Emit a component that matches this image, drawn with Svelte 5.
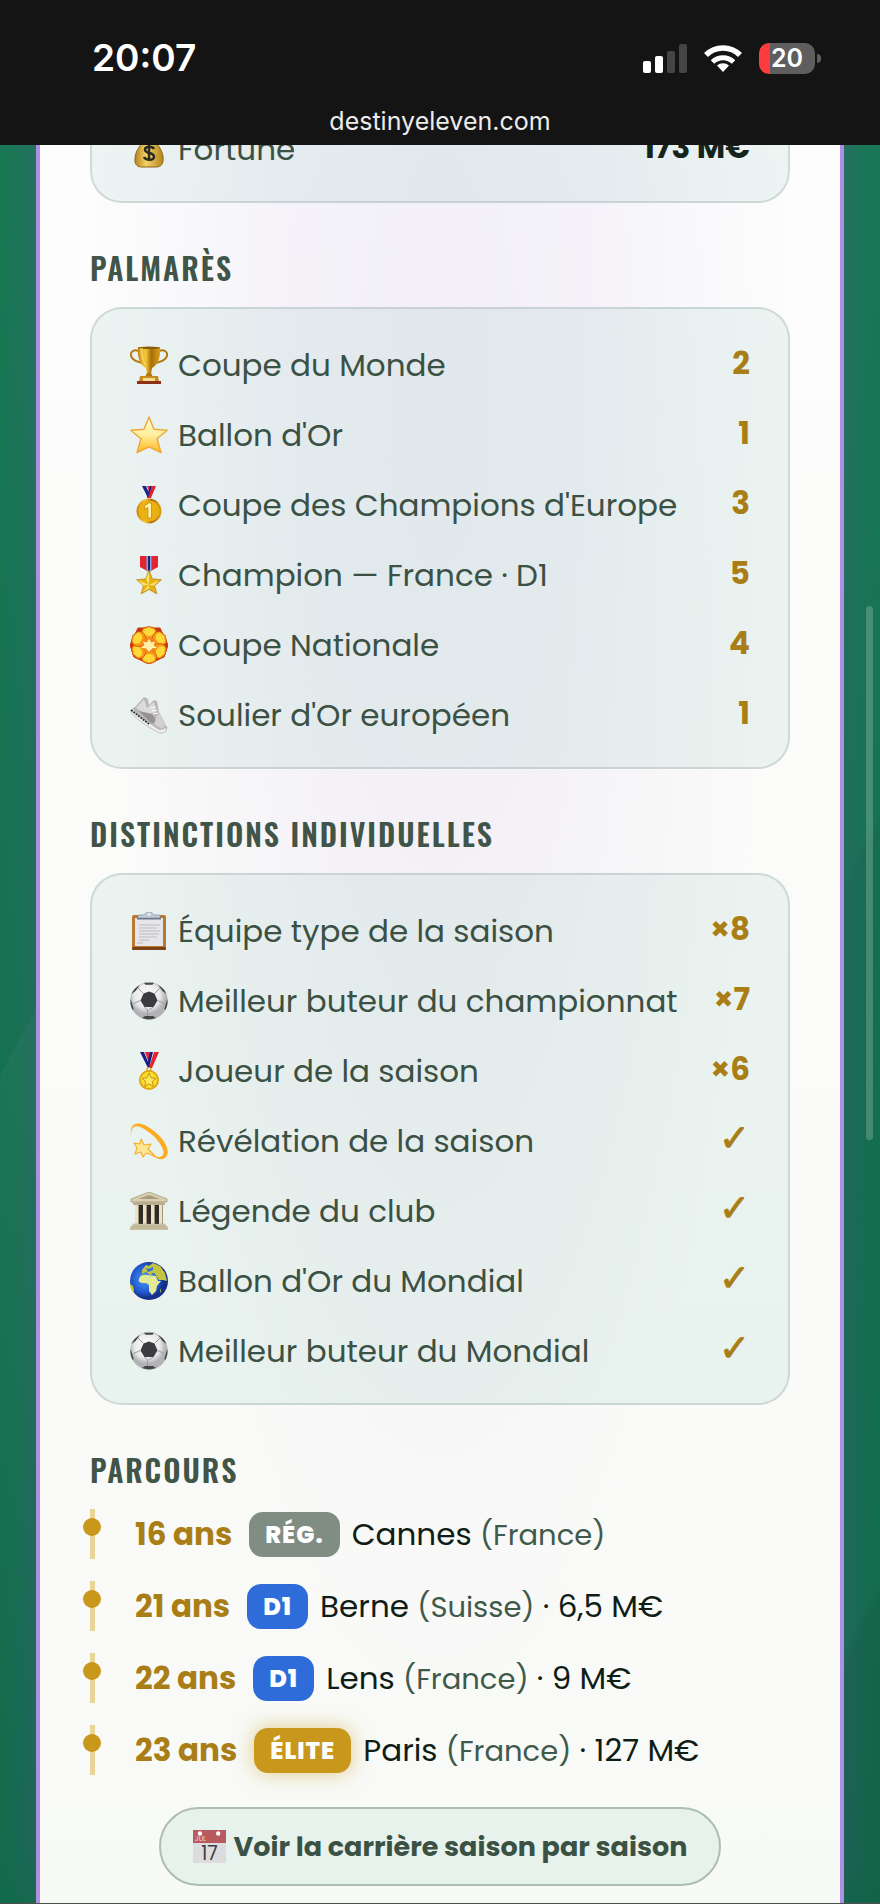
<script lang="ts">
	type Row = { icon: string; label: string; value: string };
	type Stop = { age: number; tier: "reg" | "d1" | "elite"; club: string; country: string; fee?: string };

	const tierNames = { reg: "RÉG.", d1: "D1", elite: "ÉLITE" };

	const stats: Row[] = [{ icon: "money", label: "Fortune", value: "173 M€" }];

	const trophies: Row[] = [
		{ icon: "trophy", label: "Coupe du Monde", value: "2" },
		{ icon: "star", label: "Ballon d'Or", value: "1" },
		{ icon: "medal-first", label: "Coupe des Champions d'Europe", value: "3" },
		{ icon: "medal-military", label: "Champion — France · D1", value: "5" },
		{ icon: "rosette", label: "Coupe Nationale", value: "4" },
		{ icon: "shoe", label: "Soulier d'Or européen", value: "1" },
	];

	const honours: Row[] = [
		{ icon: "clipboard", label: "Équipe type de la saison", value: "×8" },
		{ icon: "ball", label: "Meilleur buteur du championnat", value: "×7" },
		{ icon: "medal-sport", label: "Joueur de la saison", value: "×6" },
		{ icon: "dizzy", label: "Révélation de la saison", value: "✓" },
		{ icon: "temple", label: "Légende du club", value: "✓" },
		{ icon: "globe", label: "Ballon d'Or du Mondial", value: "✓" },
		{ icon: "ball", label: "Meilleur buteur du Mondial", value: "✓" },
	];

	const career: Stop[] = [
		{ age: 16, tier: "reg", club: "Cannes", country: "France" },
		{ age: 21, tier: "d1", club: "Berne", country: "Suisse", fee: "6,5 M€" },
		{ age: 22, tier: "d1", club: "Lens", country: "France", fee: "9 M€" },
		{ age: 23, tier: "elite", club: "Paris", country: "France", fee: "127 M€" },
	];
</script>

{#snippet icon(name: string)}
	<svg class="icon" viewBox="0 0 38 38" aria-hidden="true">
		{#if name === "money"}
			<path d="M14 2h10l-2 8c8 5 12 14 11 21-.4 4-3 6-7 6H12c-4 0-7-2-7-6-.5-8 4-16 11-21z" fill="url(#gold-v)" stroke="#8c6516" stroke-width="1" />
			<path d="M14 10h10" stroke="#8a5a1c" stroke-width="3" />
			<path d="M24 19c-1-2.500-8.500-3.500-9 .5-.4 4.500 9 2.500 9 7 0 4.500-8.500 4-10 .5M19 14v17" fill="none" stroke="#2b2a22" stroke-width="2.400" />
		{:else if name === "trophy"}
			<path d="M9 5C1 2-1 9 3 13c3 3 7 3 9 4M29 5c8-3 10 4 6 8-3 3-7 3-9 4" fill="none" stroke="#b47a0e" stroke-width="2" />
			<path d="M8 1h22c1 10-2 18-8 21l-1 6h-4l-1-6C10 19 7 11 8 1z" fill="url(#gold-h)" />
			<ellipse cx="19" cy="1.800" rx="11" ry="1.300" fill="#8a5c08" />
			<path d="M13 2c0 8 1 14 4 18-5-3-7-9-7-18z" fill="#ffe98a" opacity=".5" />
			<path d="M17 27h4l2 4h-8z" fill="#b37808" />
			<path d="M10 30h18l1 6H9z" fill="#c98a1c" />
			<path d="M13 32h12v3H13z" fill="#f7d98f" />
			<path d="M7 35h24v3H7z" fill="#8d3115" />
		{:else if name === "star"}
			<path d="M19 1l5 12.200 13.200 1-10.200 8.600L31 36.500l-12-5.700L7 36.500l4-13.700L.8 14.200l13.200-1z" fill="url(#star-fill)" stroke="#f0a83a" stroke-width="1.500" stroke-linejoin="round" />
		{:else if name === "medal-first"}
			<path d="M12 0h4l4 9-2 3z" fill="#1c2489" />
			<path d="M17 0h4l-1 8z" fill="#e5232d" />
			<path d="M22 0h4l-5 12h-4z" fill="#e5232d" />
			<path d="M20 0h2l-4 12-1-2z" fill="#1c2489" />
			<circle cx="19" cy="25" r="12.500" fill="url(#gold-h)" />
			<circle cx="19" cy="25" r="10.500" fill="#edb013" />
			<path d="M14.500 20l4-3h3v15h-3.600V21.500l-3.400 1.800z" fill="#fff0a6" stroke="#b98207" stroke-width=".7" />
		{:else if name === "medal-military"}
			<path d="M10 0h18v11l-9 5-9-5z" fill="#e52431" />
			<path d="M16.500 0h5v15l-2.500 1-2.500-1z" fill="#7fa8e8" />
			<path d="M18 0h2v16h-2z" fill="#1a2570" />
			<path d="M19 14l3.300 8.800 9.200.9-7 6 2.500 8.300-8-4.600-8 4.600 2.500-8.300-7-6 9.200-.9z" fill="#e8b310" stroke="#b08011" stroke-width=".7" />
			<path d="M19 16v13l-3-6zM19 29l-11-5 5.500 5.500zM19 29l-6.500 7 6.500-3.500zM19 29l10-5-5 5.500z" fill="#fff08a" opacity=".8" />
		{:else if name === "rosette"}
			<path d="M8 2l22 0 8 17-4 12-15 7-15-7-4-12z" fill="#c9380d" stroke="#c9380d" stroke-linejoin="round" />
			{#each [0, 60, 120, 180, 240, 300] as turn}
				<g transform="rotate({turn} 19 19)">
					<path d="M19 14c-6 0-9-6-7-10 2-4 5-2 7-4 2 2 5 0 7 4 2 4-1 10-7 10z" fill="#f79a17" stroke="#c9470c" stroke-width=".7" />
					<path d="M13.500 4c2-2 4-1 5.500-3 1.500 2 3.500 1 5.500 3 1 3-1 6-5.500 6s-6.500-3-5.500-6z" fill="#fdda38" />
				</g>
			{/each}
			<circle cx="19" cy="19" r="7.500" fill="#f2841c" />
			<path d="M19 12.500l2 4 4-1-1.500 3.500L27 22l-4.600.3L19 26l-3-3.700-5-.3 3.400-3-1.400-3.500 4 1z" fill="#fff2a8" />
		{:else if name === "shoe"}
			<path d="M2 13c4-2 7-7 12-12l4 2 1 6 5-5 3 1 2 11 7 13c2 4 0 7-4 7-8-4-20-14-30-23z" fill="#b9b7b8" />
			<path d="M6 12l8-9 3 9 7-6 2 10-9 3z" fill="#dcdadb" />
			<path d="M9 15l13 3 6 9-7 0z" fill="#949295" />
			<path d="M26 22l3-5 7 12-4 4-8-5z" fill="#d3cfd0" />
			<path d="M1 14l27 19c3 1 6 0 9-2l-1 4c-3 3-7 2-10 0C18 31 9 25 2 18z" fill="#f1efef" stroke="#a5a2a5" stroke-width=".6" />
			<path d="M1 14l18 14" stroke="#343238" stroke-width="1.800" stroke-dasharray="2 1" />
			<path d="M21 12l5-1M22 15l5-1M23 18l5-1" stroke="#fff" stroke-width="1" />
		{:else if name === "clipboard"}
			<rect x="2" y="3" width="34" height="35" rx="2" fill="#b97833" />
			<rect x="2" y="35" width="34" height="3" rx="1" fill="#7d4218" />
			<path d="M5 6h28v28H5z" fill="#e6e6e8" />
			<path d="M9 13h21M9 16h18M9 19h21M9 22h20M9 25h18M9 28h10M7 31h6" stroke="#bdbdc0" stroke-width="1" />
			<path d="M8 3h6c2-4 8-4 10 0h6v3H8z" fill="#c2cad8" stroke="#8993a6" stroke-width=".7" />
			<circle cx="19" cy="2.500" r="1.300" fill="#f0f4f6" />
			<path d="M7 6h24v1.500H7z" fill="#6e7788" />
		{:else if name === "ball"}
			<circle cx="19" cy="19" r="18.400" fill="url(#ball-fill)" stroke="#a9a9ab" stroke-width=".6" />
			<path d="M13.500 11.500L19 9.500l5.500 2 3 7-4 6.500h-9l-4-6.500z" fill="#3b3c3f" />
			<path d="M10 3c-4 2-7 5-8.500 9l4-3zM28 3c4 2 7 5 8.500 9l-4-3zM12 36c5 1.800 9 1.800 14 0l-3-2h-8zM.7 17l3 10-1 1C1 25 0 21 .7 17zM37.300 17l-3 10 1 1c1.700-3 2.700-7 2-11zM14 .8h10l-1.500 2h-7z" fill="#45464a" />
			<path d="M13.500 11.500L8 6M24.500 11.500L30 6M27.500 18.500l7 3M10.500 18.500l-7 3M14.500 25l3 3v6M23.500 25l-5 3" stroke="#9b9b9f" stroke-width="1" fill="none" />
		{:else if name === "medal-sport"}
			<path d="M10 0h4l6 15-2 1z" fill="#171f86" />
			<path d="M15 0h5l1 7-2 5z" fill="#e5232d" />
			<path d="M24 0h5l-7 16h-3z" fill="#e5232d" />
			<path d="M20 0h3l-4 16-2-3z" fill="#171f86" />
			<circle cx="19" cy="17.500" r="2" fill="none" stroke="#d29b12" stroke-width="1.200" />
			<circle cx="19" cy="28" r="10" fill="#dea40d" />
			<circle cx="19" cy="28" r="8.200" fill="#fbdc2c" />
			<path d="M19 21l2 4.800 5 .4-3.800 3.300 1.200 5L19 31.800l-4.400 2.700 1.200-5-3.800-3.300 5-.4z" fill="#ffe95c" stroke="#b98207" stroke-width=".8" />
		{:else if name === "dizzy"}
			<path d="M1 14C-1-1 10-2 24 9s18 25 9 28c-4 1-10-2-13-5 5 3 10 4 12 2 5-4-3-16-12-23S1-1 1 14z" fill="#fbab22" />
			<path d="M11 17l3 6 7-1-3 5 7 7-9-3-3 4-2-5-6 2 2-6-3-5 6 1z" fill="#ffe894" stroke="#f5ad32" stroke-width="1.200" stroke-linejoin="round" />
		{:else if name === "temple"}
			<path d="M19 0l18 7v3H1V7z" fill="#d9ceb0" stroke="#9c9274" stroke-width=".7" />
			<path d="M19 3l11 4H8z" fill="#a89d80" />
			<path d="M3 10h32v3H3z" fill="#b9ae90" />
			<path d="M6 13h26v19H6z" fill="#2f2b26" />
			<path d="M5 13h4v19H5zM13 13h4v19h-4zM21 13h4v19h-4zM29 13h4v19h-4z" fill="#ebe2c8" />
			<path d="M8 13h1v19H8zM16 13h1v19h-1zM24 13h1v19h-1zM32 13h1v19h-1z" fill="#a0967b" />
			<path d="M3 32h32v2H3zM1 34h36v2H1zM0 36h38v2H0z" fill="#d6ccae" stroke="#9c9274" stroke-width=".4" />
		{:else if name === "globe"}
			<circle cx="19" cy="19" r="19" fill="url(#sea)" />
			<path d="M9 17c1-4 4-5 8-4l9 1 2 5 3 0-4 5-1 5-4 4-3-4 0-6-3-2-4 0c-3-1-4-2-3-4z" fill="#e3ea95" />
			<path d="M12 8l4-5 3 1 4-3 7 3 5 7 2 8-4-1-4 0-4-6-5 1-4-3-4 2z" fill="#c3c440" />
			<path d="M16 6l3 1 4-2 0 3-5 2zM21 11l4 0-1 2z" fill="#2f6fd8" />
			<path d="M0 22l3 2 1 5-1 1C1 28 0 25 0 22z" fill="#c8c93a" />
			<path d="M30 26l1 3-1 2z" fill="#c2c948" />
		{:else if name === "calendar"}
			<path d="M0 0h38v38H0z" fill="#dcdcde" />
			<path d="M0 0h38v15H0z" fill="#b95a5f" />
			<circle cx="8" cy="4" r="2.500" fill="#fff" />
			<circle cx="29" cy="4" r="2.500" fill="#fff" />
			<text x="2" y="13" font-size="8" font-weight="400" fill="#edd5d6">JUL</text>
			<text x="19" y="34" font-size="22" font-weight="400" text-anchor="middle" fill="#3c3c40">17</text>
		{/if}
	</svg>
{/snippet}

{#snippet card(rows: Row[], dark = false)}
	<ul class="card">
		{#each rows as row}
			<li class="row">
				<span class="label">{@render icon(row.icon)}{row.label}</span>
				<strong class="value" class:dark class:check={row.value === "✓"}>{row.value}</strong>
			</li>
		{/each}
	</ul>
{/snippet}

<!-- Gradients shared by the icons -->
<svg class="defs" aria-hidden="true">
	<defs>
		<linearGradient id="gold-h">
			<stop offset="0" stop-color="#c9820a" />
			<stop offset=".35" stop-color="#f6c93a" />
			<stop offset=".6" stop-color="#a86e08" />
			<stop offset="1" stop-color="#dba01c" />
		</linearGradient>
		<linearGradient id="gold-v">
			<stop offset="0" stop-color="#b5831d" />
			<stop offset=".4" stop-color="#f3d266" />
			<stop offset="1" stop-color="#b5831d" />
		</linearGradient>
		<linearGradient id="star-fill" x1="0" y1="0" x2="0" y2="1">
			<stop offset="0" stop-color="#fff7cf" />
			<stop offset=".5" stop-color="#fff0a0" />
			<stop offset="1" stop-color="#fdb81e" />
		</linearGradient>
		<radialGradient id="ball-fill" cx=".45" cy=".35">
			<stop offset="0" stop-color="#fff" />
			<stop offset=".7" stop-color="#e8e8ea" />
			<stop offset="1" stop-color="#b2b2b6" />
		</radialGradient>
		<radialGradient id="sea" cx=".4" cy=".45">
			<stop offset="0" stop-color="#4a9bf5" />
			<stop offset=".7" stop-color="#2259d0" />
			<stop offset="1" stop-color="#14308a" />
		</radialGradient>
	</defs>
</svg>

<header class="statusbar">
	<div class="status">
		<time>20:07</time>
		<div class="indicators">
			<svg width="44" height="29" viewBox="0 0 44 29" role="img" aria-label="Réseau">
				<rect x="0" y="17" width="8" height="12" rx="2" fill="#fff" />
				<rect x="12" y="12" width="8" height="17" rx="2" fill="#fff" />
				<rect x="24" y="7" width="8" height="22" rx="2" fill="#454545" />
				<rect x="36" y="0" width="8" height="29" rx="2" fill="#454545" />
			</svg>
			<svg width="38" height="28" viewBox="0 0 38 28" role="img" aria-label="Wi-Fi">
				<path d="M2 11a24 24 0 0 1 34 0" fill="none" stroke="#fff" stroke-width="5.500" />
				<path d="M8.500 18a15 15 0 0 1 21 0" fill="none" stroke="#fff" stroke-width="5" />
				<path d="M19 28l-6-6.500a9 9 0 0 1 12 0z" fill="#fff" />
			</svg>
			<div class="battery"><span>20</span></div>
		</div>
	</div>
	<div class="url">destinyeleven.com</div>
</header>

<main>
	<article class="panel">
		{@render card(stats, true)}

		<h2>Palmarès</h2>
		{@render card(trophies)}

		<h2>Distinctions individuelles</h2>
		{@render card(honours)}

		<h2>Parcours</h2>
		<ol class="timeline">
			{#each career as stop}
				<li>
					<strong class="age">{stop.age} ans</strong>
					<span class="badge {stop.tier}">{tierNames[stop.tier]}</span>
					<span>{stop.club} <span class="country">({stop.country})</span>{#if stop.fee}{` · ${stop.fee}`}{/if}</span>
				</li>
			{/each}
		</ol>

		<button class="more" type="button">{@render icon("calendar")}Voir la carrière saison par saison</button>
	</article>
	<div class="scrollbar"></div>
</main>

<style>
	:global(body) {
		background: #10704a;
		font-family: "Poppins", "DejaVu Sans", sans-serif;
		font-size: 31px;
		color: #0f1d16;
	}

	ul,
	ol {
		list-style: none;
		margin: 0;
		padding: 0;
	}

	.defs {
		position: absolute;
		width: 0;
		height: 0;
	}

	/* Phone status bar */
	.statusbar {
		position: relative;
		z-index: 1;
		padding: 38px 59px 9px 92px;
		background: #141414;
		color: #fff;
		font-family: "Inter", sans-serif;
	}

	.status {
		display: flex;
		align-items: center;
		justify-content: space-between;
		height: 40px;
	}

	time {
		font-size: 37px;
		font-weight: 600;
		line-height: 40px;
	}

	.indicators {
		display: flex;
		align-items: center;
		gap: 17px;
	}

	.battery {
		position: relative;
		width: 56px;
		height: 31px;
		margin-right: 6px;
		border-radius: 10px;
		background: linear-gradient(90deg, #fc3b3f 11px, #5e5e5e 11px);
		font-size: 25px;
		font-weight: 600;
		line-height: 31px;
		text-align: center;
	}

	.battery::after {
		content: "";
		position: absolute;
		top: 11px;
		right: -6px;
		width: 4px;
		height: 9px;
		border-radius: 0 4px 4px 0;
		background: #5e5e5e;
	}

	.url {
		margin: 28px -59px 0 -92px;
		font-size: 25px;
		line-height: 30px;
		text-align: center;
		color: #ececec;
	}

	/* Page */
	main {
		position: relative;
		padding: 0 36px;
		border-bottom: 1px solid #4c4f4e;
		background:
			linear-gradient(118deg, transparent 437px, rgba(255, 255, 255, 0.03) 437px, transparent 780px, transparent 1090px, rgba(0, 20, 40, 0.06) 1096px, transparent 1450px, rgba(0, 20, 20, 0.08) 1459px),
			linear-gradient(#177b51, #10724a 70%, #106c48);
		overflow: hidden;
	}

	.panel {
		margin-top: -54px;
		padding: 0 50px 17px;
		border: 4px solid #b08ee2;
		border-width: 0 4px;
		background:
			radial-gradient(ellipse 44% 80% at 50% 10%, rgba(120, 80, 190, 0.08), rgba(120, 80, 190, 0.06) 40%, transparent),
			linear-gradient(#fdfdfd, #fbfbf9 50%, #f8faf7);
		box-shadow: 0 0 60px rgba(84, 84, 150, 0.45);
	}

	h2 {
		margin: 50px 0 24px;
		font-family: "Oswald", "Roboto Condensed", sans-serif;
		font-size: 30px;
		font-weight: 600;
		line-height: 30px;
		letter-spacing: 2px;
		text-transform: uppercase;
		color: #405548;
	}

	.card {
		padding: 19px 38px;
		border: 2px solid rgba(60, 110, 100, 0.24);
		border-radius: 32px;
		background: rgba(20, 140, 110, 0.07);
		background-clip: padding-box;
	}

	.row {
		display: flex;
		align-items: center;
		justify-content: space-between;
		height: 70px;
		line-height: 48px;
	}

	.label {
		display: flex;
		align-items: center;
		gap: 10px;
		padding-top: 4px;
		white-space: nowrap;
		color: #3b5144;
	}

	.icon {
		flex: none;
		width: 38px;
		height: 38px;
	}

	.value {
		font-weight: 700;
		color: #a97e16;
	}

	.value.dark {
		color: #14241b;
	}

	.value.check {
		font-family: "DejaVu Sans", sans-serif;
		font-size: 37px;
		-webkit-text-stroke: 1px #a97e16;
	}

	/* Career timeline */
	.timeline {
		display: grid;
		gap: 22px;
	}

	.timeline li {
		position: relative;
		display: flex;
		align-items: center;
		height: 50px;
		padding-left: 45px;
		line-height: 50px;
		white-space: nowrap;
	}

	.timeline li::before {
		content: "";
		position: absolute;
		left: 0;
		width: 5px;
		height: 50px;
		background: #ead49a;
	}

	.timeline li::after {
		content: "";
		position: absolute;
		top: 9px;
		left: -7px;
		width: 18px;
		height: 18px;
		border-radius: 50%;
		background: #c9971c;
	}

	.age {
		margin-right: 17px;
		font-weight: 700;
		color: #a97e16;
	}

	.badge {
		margin-right: 12px;
		padding: 0 16px;
		border-radius: 14px;
		font-size: 24px;
		font-weight: 800;
		line-height: 45px;
		letter-spacing: 1px;
		color: #fff;
	}

	.reg {
		background: #7f8d82;
	}

	.d1 {
		background: #2e6dd9;
	}

	.elite {
		background: #c9971c;
		box-shadow: 0 0 20px rgba(201, 151, 28, 0.5);
	}

	.country {
		font-size: 29px;
		color: #3f5a4b;
	}

	.more {
		display: flex;
		align-items: center;
		justify-content: center;
		gap: 8px;
		height: 79px;
		margin: 32px auto 0;
		padding: 0 32px;
		border: 2px solid #aebdb5;
		border-radius: 40px;
		background: rgba(20, 140, 110, 0.07);
		font-family: inherit;
		font-size: 27px;
		font-weight: 700;
		white-space: nowrap;
		color: #3b5144;
	}

	.more .icon {
		width: 33px;
		height: 33px;
	}

	.scrollbar {
		position: absolute;
		top: 461px;
		right: 7px;
		width: 7px;
		height: 534px;
		border-radius: 4px;
		background: rgba(255, 255, 255, 0.2);
	}
</style>
